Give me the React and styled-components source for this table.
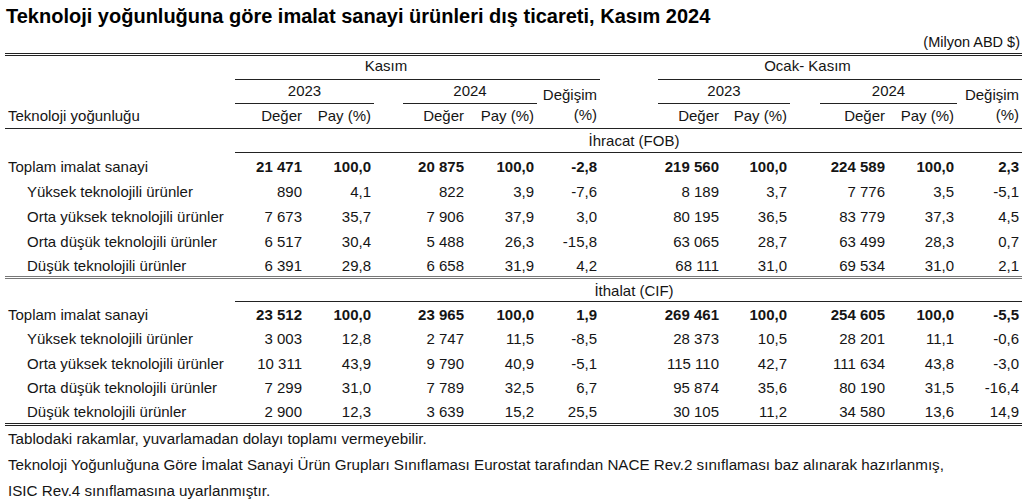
import styled, { createGlobalStyle } from "styled-components";

const GlobalStyle = createGlobalStyle`
  body {
    margin: 0;
    background: #fff;
    color: #111;
    font-family: "Liberation Sans", Arial, sans-serif;
  }
`;

const COLS = [230, 70, 69, 29, 64, 70, 63, 58, 64, 68, 30, 68, 69, 65];

const exports = [
  ["Toplam imalat sanayi", ["21 471", "100,0", "20 875", "100,0", "-2,8", "219 560", "100,0", "224 589", "100,0", "2,3"], true],
  ["Yüksek teknolojili ürünler", ["890", "4,1", "822", "3,9", "-7,6", "8 189", "3,7", "7 776", "3,5", "-5,1"]],
  ["Orta yüksek teknolojili ürünler", ["7 673", "35,7", "7 906", "37,9", "3,0", "80 195", "36,5", "83 779", "37,3", "4,5"]],
  ["Orta düşük teknolojili ürünler", ["6 517", "30,4", "5 488", "26,3", "-15,8", "63 065", "28,7", "63 499", "28,3", "0,7"]],
  ["Düşük teknolojili ürünler", ["6 391", "29,8", "6 658", "31,9", "4,2", "68 111", "31,0", "69 534", "31,0", "2,1"]],
];

const imports = [
  ["Toplam imalat sanayi", ["23 512", "100,0", "23 965", "100,0", "1,9", "269 461", "100,0", "254 605", "100,0", "-5,5"], true],
  ["Yüksek teknolojili ürünler", ["3 003", "12,8", "2 747", "11,5", "-8,5", "28 373", "10,5", "28 201", "11,1", "-0,6"]],
  ["Orta yüksek teknolojili ürünler", ["10 311", "43,9", "9 790", "40,9", "-5,1", "115 110", "42,7", "111 634", "43,8", "-3,0"]],
  ["Orta düşük teknolojili ürünler", ["7 299", "31,0", "7 789", "32,5", "6,7", "95 874", "35,6", "80 190", "31,5", "-16,4"]],
  ["Düşük teknolojili ürünler", ["2 900", "12,3", "3 639", "15,2", "25,5", "30 105", "11,2", "34 580", "13,6", "14,9"]],
];

// spacer columns sit after these value indexes
const GAP_AFTER = [1, 4, 6];

function DataRow({ label, values, total, top, h }) {
  const cells = [];
  values.forEach((v, i) => {
    cells.push(
      <Num key={i} $bold={total}>
        {v}
      </Num>
    );
    if (GAP_AFTER.includes(i)) cells.push(<Gap key={"g" + i} />);
  });
  return (
    <Row $top={top} $h={h}>
      <Label $sub={!total}>{label}</Label>
      {cells}
    </Row>
  );
}

function HeadRow() {
  return (
    <>
      <HRow $h={25} $lift={4}>
        <Blank />
        <Group colSpan={5}>Kasım</Group>
        <Rule />
        <Gap />
        <Group colSpan={5}>Ocak- Kasım</Group>
        <Rule />
      </HRow>
      <HRow $h={24} $lift={3}>
        <Blank />
        <Group colSpan={2}>2023</Group>
        <Gap />
        <Group colSpan={2}>2024</Group>
        <Change rowSpan={2}>
          Değişim
          <br />
          (%)
        </Change>
        <Gap />
        <Group colSpan={2}>2023</Group>
        <Gap />
        <Group colSpan={2}>2024</Group>
        <Change rowSpan={2}>
          Değişim
          <br />
          (%)
        </Change>
      </HRow>
      <HRow $h={25} $lift={1}>
        <Label as="th">Teknoloji yoğunluğu</Label>
        <Sub>Değer</Sub>
        <Sub>Pay (%)</Sub>
        <Gap />
        <Sub>Değer</Sub>
        <Sub>Pay (%)</Sub>
        <Gap />
        <Sub>Değer</Sub>
        <Sub>Pay (%)</Sub>
        <Gap />
        <Sub>Değer</Sub>
        <Sub>Pay (%)</Sub>
      </HRow>
    </>
  );
}

export default function App() {
  return (
    <Page>
      <GlobalStyle />
      <Title>Teknoloji yoğunluğuna göre imalat sanayi ürünleri dış ticareti, Kasım 2024</Title>
      <Unit>(Milyon ABD $)</Unit>
      <Table>
        <colgroup>
          {COLS.map((w, i) => (
            <col key={i} style={{ width: w }} />
          ))}
        </colgroup>
        <thead>
          <HeadRow />
        </thead>
        <tbody>
          <Section $h={24}>
            <Blank />
            <SectionName colSpan={13}>İhracat (FOB)</SectionName>
          </Section>
          {exports.map(([l, v, t]) => (
            <DataRow key={l} label={l} values={v} total={t} top={3} h={25} />
          ))}
          <Section $gray $h={24}>
            <Blank />
            <SectionName colSpan={13}>İthalat (CIF)</SectionName>
          </Section>
          {imports.map(([l, v, t]) => (
            <DataRow key={l} label={l} values={v} total={t} top={1} h={24.5} />
          ))}
        </tbody>
      </Table>
      <Notes>
        <Note>Tablodaki rakamlar, yuvarlamadan dolayı toplamı vermeyebilir.</Note>
        <Note>
          Teknoloji Yoğunluğuna Göre İmalat Sanayi Ürün Grupları Sınıflaması Eurostat tarafından NACE Rev.2 sınıflaması baz alınarak hazırlanmış,
        </Note>
        <Note>ISIC Rev.4 sınıflamasına uyarlanmıştır.</Note>
      </Notes>
    </Page>
  );
}

const Page = styled.div`
  width: 1017px;
  padding: 4px 7px 0 5px;
`;

const Title = styled.h1`
  margin: 0;
  padding-left: 1px;
  font-size: 20px;
  font-weight: 700;
  line-height: 24px;
  color: #000;
`;

const Unit = styled.div`
  margin-top: 6px;
  padding-right: 2px;
  text-align: right;
  font-size: 14.5px;
  line-height: 16px;
  padding-bottom: 3px;
`;

const Table = styled.table`
  width: 1017px;
  table-layout: fixed;
  border-collapse: collapse;
  border-top: 3px double #222;
  border-bottom: 3px double #222;
  font-size: 15px;
  color: #151515;

  th {
    font-weight: 400;
  }
`;

const HRow = styled.tr`
  height: ${(p) => p.$h}px;

  & > th:not([rowspan]) {
    padding-bottom: ${(p) => p.$lift}px;
  }

  &:last-child th {
    border-bottom: 1px solid #222;
  }
`;

const Blank = styled.td`
  padding: 0;
`;

const Gap = styled.td`
  padding: 0;
`;

const Group = styled.th`
  padding: 0;
  text-align: center;
  border-bottom: 1px solid #222;
  white-space: nowrap;
`;

const Rule = styled.th`
  padding: 0;
  border-bottom: 1px solid #222;
`;

const Change = styled.th`
  padding: 0 3px 3px 0;
  text-align: right;
  vertical-align: bottom;
  line-height: 20px;
  border-bottom: 1px solid #222;
`;

const Sub = styled.th`
  padding: 0 3px 0 0;
  text-align: right;
  white-space: nowrap;
`;

const Label = styled.td`
  padding: 0 0 0 ${(p) => (p.$sub ? 22 : 3)}px;
  text-align: left;
  white-space: nowrap;
`;

const Section = styled.tr`
  height: ${(p) => p.$h}px;

  td {
    border-top: ${(p) => (p.$gray ? "3px double #777" : "1px solid #222")};
  }
`;

const SectionName = styled.td`
  padding: 0 0 0 11px;
  text-align: center;
  border-bottom: 1px solid #222;
`;

const Row = styled.tr`
  height: ${(p) => p.$h}px;

  td {
    padding-top: ${(p) => p.$top}px;
  }
`;

const Num = styled.td`
  padding: 0 3px 0 0;
  text-align: right;
  white-space: nowrap;
  font-weight: ${(p) => (p.$bold ? 700 : 400)};
`;

const Notes = styled.div`
  padding-left: 3px;
`;

const Note = styled.p`
  margin: 0;
  font-size: 15.2px;
  line-height: 26px;
  color: #151515;
`;
